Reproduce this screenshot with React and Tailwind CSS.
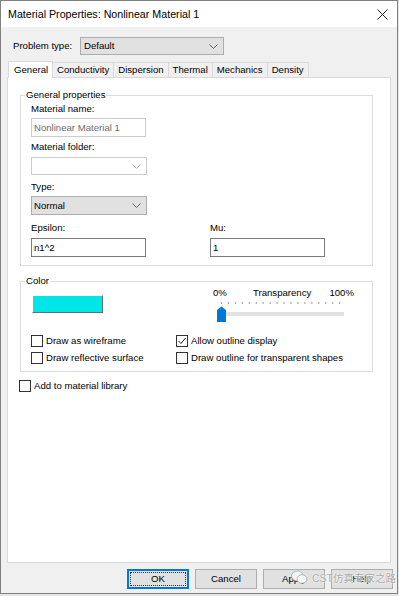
import React from "react";

const Chevron = ({ color = "#606060" }) => (
  <svg width="9" height="5" viewBox="0 0 9 5" className="shrink-0">
    <path d="M0.5 0.5 L4.5 4.5 L8.5 0.5" fill="none" stroke={color} strokeWidth="1" />
  </svg>
);

function CheckBox({ label, checked }) {
  return (
    <div className="flex items-center h-[17px]">
      <div className="w-[12px] h-[12px] border border-[#333] bg-white flex items-center justify-center">
        {checked && (
          <svg width="10" height="10" viewBox="0 0 10 10">
            <path d="M1.5 5 L4 7.5 L8.5 2" fill="none" stroke="#222" strokeWidth="1" />
          </svg>
        )}
      </div>
      <span className="ml-[3px]">{label}</span>
    </div>
  );
}

function Button({ children, focused }) {
  if (focused) {
    return (
      <div className="w-[62px] h-[20px] border-2 border-[#0078d7] bg-[#e1e1e1] p-[1px]">
        <div className="w-full h-full border border-dotted border-[#333] flex items-center justify-center">
          {children}
        </div>
      </div>
    );
  }
  return (
    <div className="w-[62px] h-[20px] border border-[#adadad] bg-[#e1e1e1] flex items-center justify-center">
      {children}
    </div>
  );
}

const tabs = ["Conductivity", "Dispersion", "Thermal", "Mechanics", "Density"];

export default function App() {
  return (
    <div className="w-[399px] h-[596px] bg-[#e6e6e6] relative font-['Liberation_Sans',sans-serif] text-[9.6px] leading-[12px] text-black">
      <div className="w-[398px] h-[594px] border border-[#808080] bg-[#f0f0f0] flex flex-col">
        {/* title bar */}
        <div className="h-[26px] bg-white flex items-center justify-between pl-[7px] pr-[9px]">
          <span className="text-[10.7px]">Material Properties: Nonlinear Material 1</span>
          <svg width="11" height="11" viewBox="0 0 11 11">
            <path d="M0.5 0.5 L10.5 10.5 M10.5 0.5 L0.5 10.5" stroke="#222" strokeWidth="1" />
          </svg>
        </div>

        {/* problem type */}
        <div className="flex items-center mt-[10px] pl-[12px]">
          <span className="w-[67px]">Problem type:</span>
          <div className="w-[144px] h-[18px] bg-[#e1e1e1] border border-[#adadad] flex items-center justify-between pl-[3px] pr-[5px]">
            <span>Default</span>
            <Chevron />
          </div>
        </div>

        {/* tabs */}
        <div className="flex items-end mt-[6px] pl-[7px] relative z-10 -mb-px">
          <div className="h-[17px] w-[45px] bg-white border border-b-0 border-[#d9d9d9] flex items-center pl-[5px]">
            General
          </div>
          {tabs.map((t) => (
            <div
              key={t}
              className="h-[16px] border border-l-0 border-[#d9d9d9] bg-[#f0f0f0] flex items-center px-[4px]"
            >
              {t}
            </div>
          ))}
        </div>

        {/* panel */}
        <div className="ml-[6px] w-[384px] h-[486px] bg-white border border-[#d9d9d9] flex flex-col pl-[12px]">
          <fieldset className="mt-[11px] w-[353px] border border-[#dcdcdc] pb-[8px] pl-[10px]">
            <legend className="ml-[-6px] px-[1px]">General properties</legend>
            <div className="mt-[2px]">Material name:</div>
            <div className="mt-[3px] w-[115px] h-[19px] border border-[#cccccc] flex items-center pl-[2px] text-[#6d6d6d]">
              Nonlinear Material 1
            </div>
            <div className="mt-[4px]">Material folder:</div>
            <div className="mt-[4px] w-[116px] h-[18px] border border-[#cccccc] flex items-center justify-end pr-[5px]">
              <Chevron color="#bcbcbc" />
            </div>
            <div className="mt-[6px]">Type:</div>
            <div className="mt-[3px] w-[116px] h-[19px] bg-[#e1e1e1] border border-[#adadad] flex items-center justify-between pl-[2px] pr-[5px]">
              <span>Normal</span>
              <Chevron />
            </div>
            <div className="flex mt-[7px]">
              <div className="w-[179px]">
                <div>Epsilon:</div>
                <div className="mt-[4px] w-[115px] h-[19px] border border-[#7a7a7a] flex items-center pl-[2px]">
                  n1^2
                </div>
              </div>
              <div>
                <div>Mu:</div>
                <div className="mt-[4px] w-[115px] h-[19px] border border-[#7a7a7a] flex items-center pl-[2px]">
                  1
                </div>
              </div>
            </div>
          </fieldset>

          <fieldset className="mt-[9px] w-[353px] border border-[#dcdcdc] pb-[5px] pl-[10px]">
            <legend className="ml-[-6px] px-[1px]">Color</legend>
            <div className="flex">
              <div className="w-[182px] pt-[8px] pl-[1px]">
                <div className="w-[71px] h-[18px] bg-[#00e5e5] border border-t-white border-l-white border-r-[#6b6b6b] border-b-[#6b6b6b]" />
              </div>
              <div className="w-[141px]">
                <div className="flex justify-between">
                  <span>0%</span>
                  <span className="ml-[8px]">Transparency</span>
                  <span>100%</span>
                </div>
                <svg width="141" height="24" viewBox="0 0 141 24" className="block">
                  {Array.from({ length: 18 }).map((_, i) => (
                    <rect key={i} x={8 + i * 6.95} y={3} width="1" height="2" fill="#9a9a9a" />
                  ))}
                  <rect x="4" y="13" width="127" height="4" fill="#e2e2e2" />
                  <path d="M4 11 L8.5 7.5 L13 11 L13 23 L4 23 Z" fill="#0078d7" />
                </svg>
              </div>
            </div>
            <div className="flex mt-[9px]">
              <div className="w-[145px]">
                <CheckBox label="Draw as wireframe" />
                <CheckBox label="Draw reflective surface" />
              </div>
              <div>
                <CheckBox label="Allow outline display" checked />
                <CheckBox label="Draw outline for transparent shapes" />
              </div>
            </div>
          </fieldset>

          <div className="mt-[5px] -ml-[1px]">
            <CheckBox label="Add to material library" />
          </div>
        </div>

        {/* buttons */}
        <div className="flex justify-end gap-[6px] mt-[6px] pr-[4px]">
          <Button focused>OK</Button>
          <Button>Cancel</Button>
          <Button>Apply</Button>
          <Button>Help</Button>
        </div>
      </div>

      {/* watermark */}
      <div className="absolute left-[291px] top-[570px] flex items-center gap-[4px] pointer-events-none">
        <svg width="17" height="15" viewBox="0 0 17 15">
          <ellipse cx="6.5" cy="6" rx="6" ry="5" fill="#f4f4f4" stroke="#9aa" strokeWidth="0.8" />
          <ellipse cx="11" cy="9" rx="5" ry="4.2" fill="#fafafa" stroke="#9aa" strokeWidth="0.8" />
        </svg>
        <span className="text-[10.5px] text-[#a9a9a9] [text-shadow:0_0_2px_#fff,0_0_1px_#fff] font-['Liberation_Sans','Noto_Sans_CJK_SC',sans-serif]">
          CST仿真专家之路
        </span>
      </div>
    </div>
  );
}
